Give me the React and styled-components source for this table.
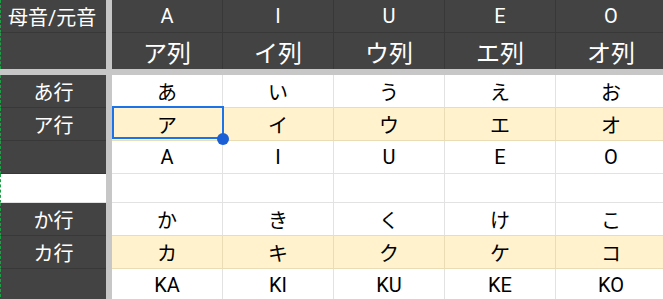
import React from "react";
import styled, { createGlobalStyle } from "styled-components";

const Global = createGlobalStyle`
  html, body { margin: 0; padding: 0; background: #ffffff; overflow: hidden; }
  body { font-family: Roboto, "Noto Sans CJK JP", sans-serif; }
`;

const DARK = "#434343";
const DARK_LINE = "#383838";
const GRID = "#e2e2e2";
const TAN = "#eadcb4";
const FILL = "#fff2cc";
const SEP = "#c7c7c7";

const Sheet = styled.div`
  display: grid;
  grid-template-columns: 106px 6px repeat(5, 111px);
  grid-template-rows: 33px 36px 6px 33px 33px 33px 29px 33px 33px 33px;
  width: 667px;
`;

const VSep = styled.div`
  grid-column: 2;
  grid-row: 1 / -1;
  background: ${SEP};
`;

const HSep = styled.div`
  grid-column: 1 / -1;
  grid-row: 3;
  background: ${SEP};
`;

const Cell = styled.div`
  box-sizing: border-box;
  display: flex;
  align-items: center;
  justify-content: center;
  white-space: nowrap;
  font-family: Roboto, "Noto Sans CJK JP", sans-serif;
`;

const HeadCell = styled(Cell)`
  background: ${DARK};
  color: #ffffff;
  font-size: ${(p) => (p.$big ? "24px" : "20px")};
  border-right: 1px solid ${DARK_LINE};
  border-bottom: ${(p) => (p.$last ? "none" : `1px solid ${DARK_LINE}`)};
  padding-top: ${(p) => (p.$big ? "1px" : "0")};
`;

const CornerCell = styled(Cell)`
  background: ${DARK};
  color: #ffffff;
  font-size: 20px;
  border-left: 1px dashed #1e9e45;
  border-bottom: ${(p) => (p.$last ? "none" : `1px solid ${DARK_LINE}`)};
  justify-content: flex-start;
  padding-left: 7px;
`;

const LabelCell = styled(Cell)`
  background: ${(p) => (p.$blank ? "#ffffff" : DARK)};
  color: #ffffff;
  font-size: 20px;
  border-left: 1px dashed #1e9e45;
  border-bottom: 1px solid ${(p) => (p.$blank ? GRID : DARK_LINE)};
`;

const DataCell = styled(Cell)`
  position: relative;
  z-index: ${(p) => (p.$selected ? 2 : "auto")};
  background: ${(p) => (p.$fill ? FILL : "#ffffff")};
  color: #000000;
  font-size: 20px;
  border-right: 1px solid ${(p) => (p.$fill ? TAN : GRID)};
  border-bottom: 1px solid ${(p) => (p.$edge ? TAN : GRID)};
`;

const Selection = styled.div`
  position: absolute;
  left: 0;
  top: -2px;
  width: 112px;
  height: 33px;
  box-sizing: border-box;
  border: 2px solid #1a73e8;
  pointer-events: none;
`;

const Handle = styled.div`
  position: absolute;
  left: 105px;
  top: 25px;
  width: 12px;
  height: 12px;
  border-radius: 50%;
  background: #1a5fd6;
  pointer-events: none;
`;

const vowels = ["A", "I", "U", "E", "O"];
const columns = ["ア列", "イ列", "ウ列", "エ列", "オ列"];

const rows = [
  { label: "あ行", cells: ["あ", "い", "う", "え", "お"] },
  { label: "ア行", cells: ["ア", "イ", "ウ", "エ", "オ"], fill: true, select: 0 },
  { label: "", cells: ["A", "I", "U", "E", "O"] },
  { blank: true, cells: ["", "", "", "", ""] },
  { label: "か行", cells: ["か", "き", "く", "け", "こ"] },
  { label: "カ行", cells: ["カ", "キ", "ク", "ケ", "コ"], fill: true },
  { label: "", cells: ["KA", "KI", "KU", "KE", "KO"] },
];

export default function App() {
  return (
    <>
      <Global />
      <Sheet>
        <VSep />
        <HSep />
        <CornerCell>母音/元音</CornerCell>
        {vowels.map((v) => (
          <HeadCell key={v}>{v}</HeadCell>
        ))}
        <CornerCell $last />
        {columns.map((c) => (
          <HeadCell key={c} $big $last>
            {c}
          </HeadCell>
        ))}
        {rows.map((row, ri) => {
          const nextFill = rows[ri + 1] && rows[ri + 1].fill;
          return (
            <React.Fragment key={ri}>
              <LabelCell $blank={row.blank}>{row.label}</LabelCell>
              {row.cells.map((c, ci) => {
                const selected = row.select === ci;
                return (
                  <DataCell
                    key={ci}
                    $fill={row.fill}
                    $edge={row.fill || nextFill}
                    $selected={selected}
                  >
                    {c}
                    {selected && (
                      <>
                        <Selection />
                        <Handle />
                      </>
                    )}
                  </DataCell>
                );
              })}
            </React.Fragment>
          );
        })}
      </Sheet>
    </>
  );
}
